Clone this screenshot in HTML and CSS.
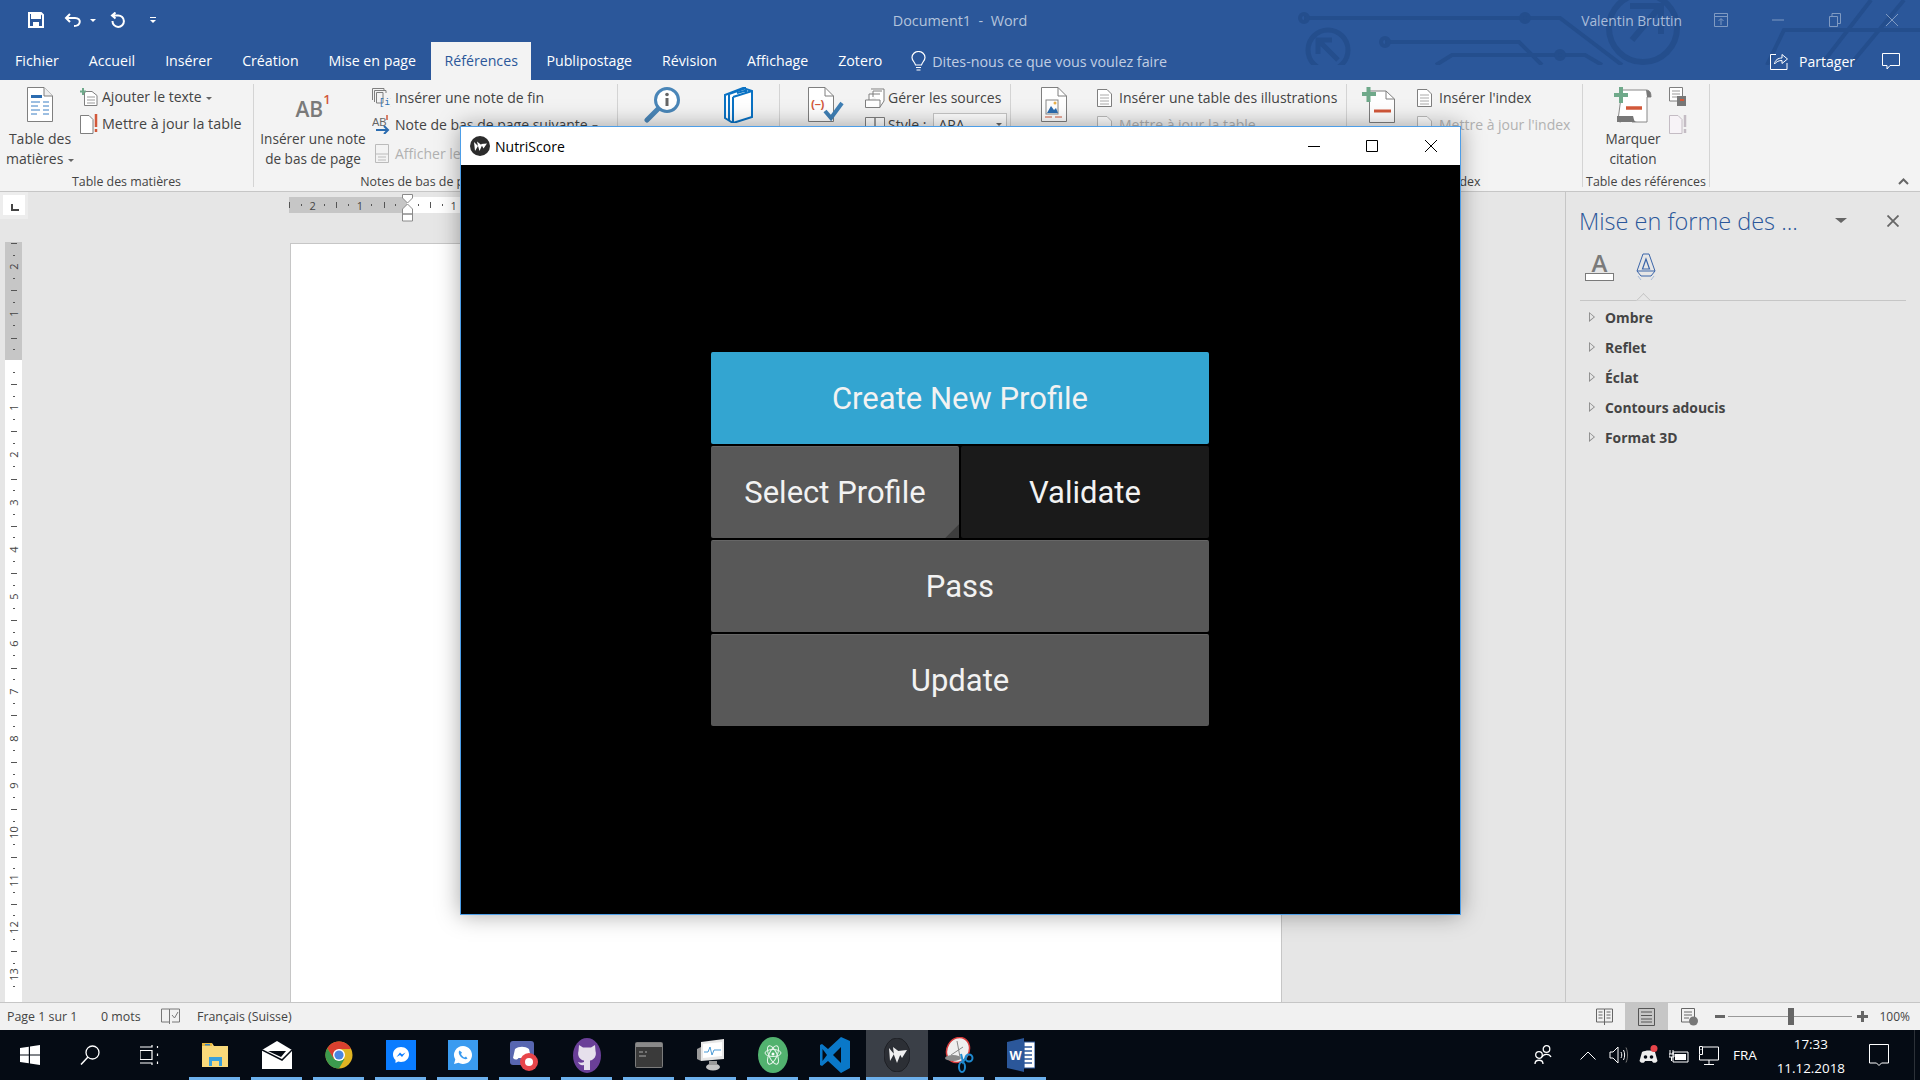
FILE: index.html
```html
<!DOCTYPE html>
<html lang="fr">
<head>
  <meta charset="UTF-8">
  <title>Document1 - Word</title>
  <link rel="stylesheet" href="styles.css">
</head>
<body>
  <div class="word">

    <div class="head">
      <svg class="circuit" viewBox="0 0 640 65" width="640" height="65">
        <g fill="none" stroke="#244e8d" stroke-width="4">
          <path d="M24 18H280L342 65M105 42H239L262 65M156 65L172 55H305L322 65M487 65L504 30H640M541 65L591 0M570 65L624 0"/>
          <circle cx="24" cy="18" r="4"/><circle cx="245" cy="18" r="4"/><circle cx="105" cy="42" r="4"/><circle cx="280" cy="55" r="4"/>
          <circle cx="48" cy="50" r="20" stroke-width="5"/>
          <path d="M38 40L58 60M38 54V40H52" stroke-width="5"/>
          <circle cx="363" cy="28" r="34" stroke-width="6"/>
          <path d="M350 6H381V34M352 40L378 9" stroke-width="6"/>
        </g>
      </svg>

      <!-- title bar -->
      <div class="titlebar">
        <div class="qat">
          <svg class="qat-save" width="16" height="16" viewBox="0 0 16 16"><path d="M1 1H13L15 3V15H1Z" fill="none" stroke="#fff" stroke-width="2"/><rect x="3" y="2" width="10" height="5" fill="#fff"/><rect x="5" y="10" width="6" height="5" fill="#fff"/></svg>
          <svg class="qat-undo" width="18" height="14" viewBox="0 0 18 14"><path d="M6 1L2 5L6 9M2 5H11C18 5 17 13 10 13" fill="none" stroke="#fff" stroke-width="2"/></svg>
          <span class="caret-white"></span>
          <svg class="qat-redo" width="17" height="16" viewBox="0 0 17 16"><path d="M6.500 .5L3 3.500L6.500 6.500M3 3.500H9A5.700 5.700 0 1 1 3.500 9" fill="none" stroke="#fff" stroke-width="2"/></svg>
          <span class="qat-more"></span>
        </div>
        <div class="doc-title">Document1&nbsp; -&nbsp; Word</div>
        <div class="title-right">
          <span class="user">Valentin Bruttin</span>
          <div class="win-btn"><svg width="14" height="14" viewBox="0 0 14 14"><path d="M.5.5H13.500V13.500H.5ZM.5 3.500H13.500M7 12V6M4.500 8L7 5.500L9.500 8" fill="none" stroke="#7f9ac2"/></svg></div>
          <div class="win-btn"><svg width="12" height="2" viewBox="0 0 12 2"><path d="M0 1H12" stroke="#7f9ac2"/></svg></div>
          <div class="win-btn"><svg width="12" height="14" viewBox="0 0 12 14"><path d="M.5 3.500H8.500V13.500H.5ZM3 3.500V.5H11.500V10.500H8.500" fill="none" stroke="#7f9ac2"/></svg></div>
          <div class="win-btn"><svg width="12" height="12" viewBox="0 0 12 12"><path d="M0 0L12 12M12 0L0 12" stroke="#7f9ac2"/></svg></div>
        </div>
      </div>

      <!-- tabs -->
      <div class="tabs">
        <span class="tab">Fichier</span>
        <span class="tab">Accueil</span>
        <span class="tab">Insérer</span>
        <span class="tab">Création</span>
        <span class="tab">Mise en page</span>
        <span class="tab active">Références</span>
        <span class="tab">Publipostage</span>
        <span class="tab">Révision</span>
        <span class="tab">Affichage</span>
        <span class="tab">Zotero</span>
        <div class="tell-me">
          <svg width="15" height="21" viewBox="0 0 15 21"><path d="M4.500 14C4 11 1 10 1 6.500A6.500 6 0 0 1 14 6.500C14 10 11 11 10.500 14ZM5 16.500H10M5.500 19H9.500" fill="none" stroke="#fff" stroke-width="1.200"/></svg>
          <span>Dites-nous ce que vous voulez faire</span>
        </div>
        <div class="share">
          <svg width="18" height="17" viewBox="0 0 18 17"><path d="M6 1.500H.5V16.500H17V10M4.500 11C5 7 8 5 12 5V1.500L17.500 6L12 10.500V7.500C9 7.500 6.500 8.500 4.500 11Z" fill="none" stroke="#fff"/></svg>
          <span>Partager</span>
        </div>
        <div class="comment"><svg width="18" height="17" viewBox="0 0 18 17"><path d="M.5.5H17.500V12.500H8L5 16V12.500H.5Z" fill="none" stroke="#fff"/></svg></div>
      </div>
    </div>

    <!-- ribbon -->
    <div class="ribbon">
      <section class="group g1">
        <div class="group-body">
          <div class="big-btn w80">
            <svg class="big-icon" width="26" height="35" viewBox="0 0 26 35"><path d="M.5.5H17L25.500 9V34.500H.5Z" fill="#fff" stroke="#7f7f7f"/><path d="M17 .5V9H25.500" fill="#eee" stroke="#7f7f7f"/><path d="M4 8H15V11H4Z" fill="#2b6cb0"/><path d="M4 15H13M16 15H22M4 19H11M16 19H22M4 23H13M16 23H22M4 27H10M16 27H22" stroke="#3b7fc4"/></svg>
            <span>Table des</span>
            <span>matières <i class="caret"></i></span>
          </div>
          <div class="small-col up">
            <div class="small-btn">
              <svg width="18" height="18" viewBox="0 0 18 18"><path d="M4.500 3.500H12L17 7.500V17.500H4.500Z" fill="#fff" stroke="#7f7f7f"/><path d="M7 9H15M7 12H15M7 15H15" stroke="#999"/><path d="M3 0V7M0 3.500H6" stroke="#6fa98a" stroke-width="2"/></svg>
              <span>Ajouter le texte <i class="caret"></i></span>
            </div>
            <div class="small-btn">
              <svg width="18" height="20" viewBox="0 0 18 20"><path d="M.5 1.500H9L13 5.500V19.500H.5Z" fill="#fff" stroke="#7f7f7f"/><path d="M16 0V13M16 15V18" stroke="#d2583a" stroke-width="2.500"/></svg>
              <span class="wide-text">Mettre à jour la table</span>
            </div>
          </div>
        </div>
        <div class="group-label">Table des matières</div>
      </section>

      <section class="group g2">
        <div class="group-body">
          <div class="big-btn w118">
            <div class="ab-icon"><span>AB</span><span class="ab-one">1</span></div>
            <span class="big-text">Insérer une note</span>
            <span class="big-text">de bas de page</span>
          </div>
          <div class="small-col">
            <div class="small-btn">
              <svg width="19" height="19" viewBox="0 0 19 19"><path d="M.5.5H12V3M2.500 2.500H14V5M4.500 4.500H11V15H4.500ZM.5.5V12M2.500 2.500V14" fill="none" stroke="#7f7f7f"/><text x="7" y="17" font-size="9" font-family="Liberation Mono" fill="#2b6cb0">[i]</text></svg>
              <span>Insérer une note de fin</span>
            </div>
            <div class="small-btn">
              <svg width="19" height="19" viewBox="0 0 19 19"><text x="0" y="11" font-size="11" font-family="Liberation Sans" fill="#666">AB</text><path d="M15 0V5" stroke="#d2583a" stroke-width="1.500"/><path d="M4 15H16M12 11L16 15L12 19" fill="none" stroke="#2b6cb0" stroke-width="2"/></svg>
              <span>Note de bas de page suivante <i class="caret"></i></span>
            </div>
            <div class="small-btn disabled low">
              <svg width="19" height="19" viewBox="0 0 19 19"><path d="M3.500.5H16.500V18.500H3.500ZM3.500 10H16.500M6 13H14M6 16H14" fill="none" stroke="#bbb"/></svg>
              <span>Afficher les notes</span>
            </div>
          </div>
        </div>
        <div class="group-label label-left">Notes de bas de page</div>
      </section>

      <section class="group g3">
        <div class="group-body">
          <div class="big-btn w82">
            <svg class="big-icon nudge" width="37" height="36" viewBox="0 0 37 36"><circle cx="23" cy="13" r="11.500" fill="#fff" stroke="#4a86b8" stroke-width="3"/><path d="M14 22L3 33" stroke="#4a86b8" stroke-width="5" stroke-linecap="round"/><path d="M23 11V19" stroke="#666" stroke-width="3"/><circle cx="23" cy="7.500" r="1.800" fill="#666"/></svg>
          </div>
          <div class="big-btn w76">
            <svg class="big-icon" width="29" height="36" viewBox="0 0 29 36"><path d="M1 8L19 1L28 4V30L9 36L1 31ZM5 6V33M9 10V36M9 10L28 4M5 7L22 1" fill="#fff" stroke="#0a72c4" stroke-width="2"/><path d="M13 6L22 3.500V6" fill="none" stroke="#0a72c4" stroke-width="2"/></svg>
          </div>
        </div>
      </section>

      <section class="group g4">
        <div class="group-body">
          <div class="big-btn w85">
            <svg class="big-icon nudge" width="36" height="36" viewBox="0 0 36 36"><path d="M.5.5H17L25.500 9V34.500H.5Z" fill="#fff" stroke="#7f7f7f"/><path d="M17 .5V9H25.500" fill="none" stroke="#7f7f7f"/><text x="3" y="21" font-size="11" font-family="Liberation Sans" font-weight="700" fill="#d2583a">(–)</text><path d="M17 24L23 31L34 16" fill="none" stroke="#3f7fb5" stroke-width="4"/></svg>
          </div>
          <div class="small-col">
            <div class="small-btn tight">
              <svg width="20" height="20" viewBox="0 0 20 20"><path d="M.5 12H15V19.500H.5ZM6 1H19V13L15 19M8 9V3H17M4 12V6H15" fill="#fff" stroke="#7f7f7f"/></svg>
              <span>Gérer les sources</span>
            </div>
            <div class="small-btn tight">
              <svg width="20" height="18" viewBox="0 0 20 18"><path d="M.5 1.500H10V17H.5ZM10 1.500H19.500V17H10Z" fill="#fff" stroke="#7f7f7f"/></svg>
              <span>Style :</span>
              <div class="style-select">APA<i class="caret"></i></div>
            </div>
          </div>
        </div>
      </section>

      <section class="group g5">
        <div class="group-body">
          <div class="big-btn w86">
            <svg class="big-icon" width="26" height="35" viewBox="0 0 26 35"><path d="M.5.5H17L25.500 9V34.500H.5Z" fill="#fff" stroke="#7f7f7f"/><path d="M17 .5V9H25.500" fill="none" stroke="#7f7f7f"/><rect x="5" y="13" width="12" height="14" fill="#fff" stroke="#888"/><path d="M6 26L10 19L13 23L15 21L17 26Z" fill="#2b6cb0"/><circle cx="14" cy="16" r="1.500" fill="#e9b04a"/><path d="M4 30H11M14 30H21" stroke="#d2583a"/></svg>
          </div>
          <div class="small-col">
            <div class="small-btn narrow">
              <svg width="15" height="18" viewBox="0 0 15 18"><path d="M.5.5H10L14.500 5V17.500H.5Z" fill="#fff" stroke="#7f7f7f"/><path d="M3 6H12M3 9H12M3 12H12M3 15H12" stroke="#aaa"/></svg>
              <span>Insérer une table des illustrations</span>
            </div>
            <div class="small-btn narrow disabled">
              <svg width="15" height="18" viewBox="0 0 15 18"><path d="M.5.5H10L14.500 5V17.500H.5Z" fill="#fff" stroke="#bbb"/></svg>
              <span>Mettre à jour la table</span>
            </div>
          </div>
        </div>
      </section>

      <section class="group g6">
        <div class="group-body">
          <div class="big-btn w70">
            <svg class="big-icon pull" width="33" height="36" viewBox="0 0 33 36"><path d="M7.500 4H24L32.500 12V35.500H7.500Z" fill="#fff" stroke="#7f7f7f"/><path d="M24 4V12H32.500" fill="none" stroke="#7f7f7f"/><path d="M12 24H29" stroke="#d2583a" stroke-width="3"/><path d="M6.500 0V15M0 7H14" stroke="#6fa98a" stroke-width="4"/></svg>
          </div>
          <div class="small-col">
            <div class="small-btn narrow">
              <svg width="15" height="18" viewBox="0 0 15 18"><path d="M.5.5H10L14.500 5V17.500H.5Z" fill="#fff" stroke="#7f7f7f"/><path d="M3 6H12M3 9H12M3 12H12M3 15H12" stroke="#aaa"/></svg>
              <span>Insérer l'index</span>
            </div>
            <div class="small-btn narrow disabled">
              <svg width="15" height="18" viewBox="0 0 15 18"><path d="M.5.5H10L14.500 5V17.500H.5Z" fill="#fff" stroke="#bbb"/></svg>
              <span>Mettre à jour l'index</span>
            </div>
          </div>
        </div>
        <div class="group-label">Index</div>
      </section>

      <section class="group g7">
        <div class="group-body">
          <div class="big-btn w100">
            <svg class="big-icon short" width="38" height="36" viewBox="0 0 38 36"><path d="M8 3H32C36 3 37 6 37 10H33V35H18C15 32 15 30 12 30H4V33C8 36 6 36 4 33Z" fill="#fff" stroke="#888"/><path d="M3 35V29H19C20 32 20 35 23 35Z" fill="#777"/><path d="M32 3C36 3 37 6 37 10H33Z" fill="#777"/><path d="M12 21H28" stroke="#d2583a" stroke-width="3.500"/><path d="M7 0V16M0 8H14" stroke="#6fa98a" stroke-width="4"/></svg>
            <span class="big-text">Marquer</span>
            <span class="big-text">citation</span>
          </div>
          <div class="tiny-col">
            <svg width="18" height="20" viewBox="0 0 18 20"><path d="M.5.5H13.500V14H.5Z" fill="#fff" stroke="#7f7f7f"/><path d="M3 4H11M3 7H11M3 10H8" stroke="#999"/><path d="M8 9H17V19H8Z" fill="#777"/><path d="M11 13H15" stroke="#d2583a" stroke-width="2"/></svg>
            <svg width="18" height="19" viewBox="0 0 18 19"><path d="M.5.5H9L13 4.500V18.500H.5Z" fill="#f7f3f7" stroke="#c4bcc4"/><path d="M16 0V12M16 14V18" stroke="#c4bcc4" stroke-width="2.500"/></svg>
          </div>
        </div>
        <div class="group-label">Table des références</div>
      </section>

      <div class="collapse">
        <svg width="11" height="7" viewBox="0 0 11 7"><path d="M1 6L5.500 1.500L10 6" fill="none" stroke="#666" stroke-width="2"/></svg>
      </div>
    </div>

    <!-- document area -->
    <div class="workspace">
      <div class="left-col">
        <div class="tab-stop"><span class="tab-stop-box"><i></i></span></div>
        <div class="v-ruler">
          <div class="v-gray">
            <div class="vcell"><b>2</b></div>
            <div class="vcell"><b>1</b></div>
            <div class="vhalf-end"></div>
          </div>
          <div class="v-white">
            <div class="vhalf-start"></div>
            <div class="vcell"><b>1</b></div>
            <div class="vcell"><b>2</b></div>
            <div class="vcell"><b>3</b></div>
            <div class="vcell"><b>4</b></div>
            <div class="vcell"><b>5</b></div>
            <div class="vcell"><b>6</b></div>
            <div class="vcell"><b>7</b></div>
            <div class="vcell"><b>8</b></div>
            <div class="vcell"><b>9</b></div>
            <div class="vcell"><b>10</b></div>
            <div class="vcell"><b>11</b></div>
            <div class="vcell"><b>12</b></div>
            <div class="vcell"><b>13</b></div>
          </div>
        </div>
      </div>

      <div class="doc-col">
        <div class="h-ruler">
          <div class="h-gray">
            <div class="hcell"><b>2</b></div>
            <div class="hcell"><b>1</b></div>
            <div class="hhalf-end"></div>
          </div>
          <div class="h-white">
            <div class="hhalf-start"></div>
            <div class="hcell"><b>1</b></div>
            <div class="hcell"><b>2</b></div>
          </div>
          <svg class="indent-marker" width="11" height="28" viewBox="0 0 11 28"><path d="M.5.5H10.500V4L5.500 9L.5 4ZM5.500 10L10.500 15V20H.5V15ZM.5 20H10.500V27H.5Z" fill="#fff" stroke="#8a8a8a"/></svg>
        </div>
        <div class="page"></div>
      </div>

      <aside class="pane">
        <div class="pane-head">
          <span class="pane-title">Mise en forme des ...</span>
          <span class="pane-caret"></span>
          <svg class="pane-close" width="12" height="12" viewBox="0 0 12 12"><path d="M.5.5L11.500 11.500M11.500.5L.5 11.500" stroke="#666" stroke-width="1.800"/></svg>
        </div>
        <div class="pane-icons">
          <div class="fill-icon"><span>A</span><i></i></div>
          <svg class="effect-icon" width="20" height="28" viewBox="0 0 20 28"><path d="M7 1H13L19 18L15 23H5L1 18Z" fill="none" stroke="#3a64a8"/><path d="M10 6L6.500 16H13.500ZM1 18H19" fill="none" stroke="#3a64a8" stroke-width="1.200"/><path d="M2 23L5 27M18 23L15 27" stroke="#a9bcd9"/></svg>
        </div>
        <div class="pane-rule"><span class="pane-notch"></span></div>
        <ul class="pane-list">
          <li>Ombre</li>
          <li>Reflet</li>
          <li>Éclat</li>
          <li>Contours adoucis</li>
          <li>Format 3D</li>
        </ul>
      </aside>
    </div>

    <!-- status bar -->
    <div class="statusbar">
      <span class="st-page">Page 1 sur 1</span>
      <span class="st-words">0 mots</span>
      <svg class="st-proof" width="19" height="17" viewBox="0 0 19 17"><path d="M.5 1H8.500V14H.5ZM8.500 1V16M8.500 1H18.500V14H11M11 7L13.500 10L17 4" fill="none" stroke="#777"/></svg>
      <span class="st-lang">Français (Suisse)</span>
      <div class="st-right">
        <div class="view"><svg width="17" height="17" viewBox="0 0 17 17"><path d="M.5 1H8.500V14H.5ZM8.500 1H16.500V14H8.500ZM8.500 14V17M2.500 4H6.500M2.500 7H6.500M2.500 10H6.500M10.500 4H14.500M10.500 7H14.500M10.500 10H14.500" fill="none" stroke="#666"/></svg></div>
        <div class="view active"><svg width="17" height="18" viewBox="0 0 17 18"><path d="M.5.5H16.500V17.500H.5ZM3 4H14M3 7.500H14M3 11H14M3 14H14" fill="none" stroke="#555"/></svg></div>
        <div class="view"><svg width="17" height="18" viewBox="0 0 17 18"><path d="M.5.5H13.500V14H.5ZM3 4H11M3 7H11M3 10H8" fill="#f1f1f1" stroke="#666"/><circle cx="12.500" cy="13" r="4.500" fill="#777"/></svg></div>
        <span class="zoom-minus"></span>
        <div class="zoom-track"><span class="zoom-thumb"></span></div>
        <span class="zoom-plus"></span>
        <span class="zoom-value">100%</span>
      </div>
    </div>

    <!-- taskbar -->
    <div class="taskbar">
      <div class="start">
        <svg width="20" height="20" viewBox="0 0 20 20"><path d="M0 3L8.800 1.700V9.500H0ZM10 1.500L20 0V9.500H10ZM0 10.500H8.800V18.300L0 17ZM10 10.500H20V20L10 18.500Z" fill="#fff"/></svg>
      </div>
      <div class="start">
        <svg width="20" height="20" viewBox="0 0 20 20"><circle cx="12.500" cy="7.500" r="6.500" fill="none" stroke="#fff" stroke-width="1.300"/><path d="M8 12L1 19.500" stroke="#fff" stroke-width="1.500"/></svg>
      </div>
      <div class="start">
        <svg width="20" height="20" viewBox="0 0 20 20"><path d="M0 2H12V0M0 18H12V20M0 5.500H12V14.500H0ZM17.500 1V3M17.500 8.500V11M17.500 16.500V19" fill="none" stroke="#fff" stroke-width="1.200"/></svg>
      </div>

      <div class="task-apps">
        <div class="app open"><svg width="28" height="28" viewBox="0 0 28 28"><path d="M1 2H11L13 5H27V26H1Z" fill="#f9d97a"/><path d="M1 2H11V5H1Z" fill="#e8b83e"/><rect x="4" y="3" width="5" height="1.500" fill="#3a87c8"/><path d="M8 16H21V25H8Z" fill="#3aa0dc"/><rect x="11" y="20" width="7" height="6" fill="#f9d97a"/></svg></div>
        <div class="app open"><svg width="30" height="28" viewBox="0 0 30 28"><path d="M0 9L15 0L30 9V28H0Z" fill="#fff"/><path d="M0 9L20 19L30 9" fill="none" stroke="#050b14" stroke-width="1.500"/><path d="M6 10H24L19 16Z" fill="#050b14"/></svg></div>
        <div class="app open"><svg width="28" height="34" viewBox="0 0 28 28"><circle cx="14" cy="14" r="13.500" fill="#e0b422"/><path d="M14 .5A13.500 13.500 0 0 0 2.300 7.200L8 17H14V8H26A13.500 13.500 0 0 0 14 .5Z" fill="#d8402f"/><path d="M2.300 7.200A13.500 13.500 0 0 0 14 27.500L19.500 18H9Z" fill="#3c9a4e"/><circle cx="14" cy="14" r="6" fill="#fff"/><circle cx="14" cy="14" r="4.600" fill="#4a86e0"/></svg></div>
        <div class="app open"><div class="square blue1"><svg width="18" height="18" viewBox="0 0 18 18"><path d="M9 1C4.300 1 1 4.200 1 8.500C1 10.800 2 12.700 3.500 14V17L6.200 15.500C7.100 15.800 8 16 9 16C13.700 16 17 12.800 17 8.500S13.700 1 9 1Z" fill="#fff"/><path d="M4.500 11L8 6.500L10 8.500L13.500 6.500L10 11L8 9Z" fill="#0a7cff"/></svg></div></div>
        <div class="app open"><div class="square blue2"><svg width="20" height="20" viewBox="0 0 20 20"><path d="M10 1A9 9 0 0 0 2.300 14.600L1 19L5.500 17.800A9 9 0 1 0 10 1Z" fill="#fff"/><path d="M6.500 5.500C5 7 6 10 8 12S13 15 14.500 13.500L13 11.500L11.500 12.500C10 12 8.500 10 8 9L9 7.500Z" fill="#3a9bf0"/></svg></div></div>
        <div class="app open"><svg width="30" height="34" viewBox="0 0 30 34"><rect y="3" width="24" height="24" rx="3" fill="#5866b0"/><path d="M5 11C9 8 15 8 19 11L21 20C19 22 17 22 15.500 20H8.500C7 22 5 22 3 20Z" fill="#fff"/><circle cx="19" cy="24" r="9" fill="#e8454a"/><circle cx="19" cy="24" r="4" fill="#fff"/></svg></div>
        <div class="app open"><svg width="28" height="35" viewBox="0 0 28 35"><ellipse cx="14" cy="17.500" rx="14" ry="17.500" fill="#6a3f98"/><path d="M6 7L10 9.500H18L22 7L22.500 13C24 18 21 22 17 22.500V32H11V27C8 28 6 26 5 24C7 25 9 25 11 24V22.500C7 22 4 18 5.500 13Z" fill="#e6e0ec"/></svg></div>
        <div class="app open"><svg width="28" height="26" viewBox="0 0 28 26"><rect x=".5" y=".5" width="27" height="25" rx="1" fill="#3a3a3a" stroke="#7c7c7c"/><rect x="1" y="1" width="26" height="4" fill="#8a8a8a"/><path d="M4 10H8M10 10H12M4 14H11" stroke="#aaa"/></svg></div>
        <div class="app open"><svg width="28" height="32" viewBox="0 0 28 32"><path d="M4 3L27 0V20L4 22Z" fill="#e7e7e7"/><path d="M6 5L25 3V17L6 19Z" fill="#fff"/><path d="M7 13H11L13 8L15 16L17 11H24" fill="none" stroke="#4a9ad6"/><ellipse cx="16" cy="28" rx="7" ry="3.500" fill="#c4c4c4"/><path d="M12 22H20V26H12Z" fill="#9a9a9a"/><path d="M0 10L4 8V22L0 20Z" fill="#9a9a9a"/></svg></div>
        <div class="app open"><svg width="30" height="36" viewBox="0 0 30 36"><ellipse cx="15" cy="18" rx="15" ry="18" fill="#52b26f"/><ellipse cx="15" cy="16" rx="8" ry="3.500" fill="none" stroke="#e8f5ec"/><ellipse cx="15" cy="18" rx="4" ry="10" fill="none" stroke="#e8f5ec" transform="rotate(25 15 18)"/><ellipse cx="15" cy="18" rx="4" ry="10" fill="none" stroke="#e8f5ec" transform="rotate(-25 15 18)"/><circle cx="15" cy="17" r="1.500" fill="#fff"/></svg></div>
        <div class="app open"><svg width="30" height="36" viewBox="0 0 30 36"><path d="M21 0L30 4V31L21 36L8 24L2 29L0 28V8L2 7L8 12ZM21 10L13 18L21 26Z" fill="#0a78c8"/><path d="M2.500 12V24L7 18Z" fill="#050b14"/></svg></div>
        <div class="app open current"><svg width="26" height="34" viewBox="0 0 26 34"><ellipse cx="13" cy="17" rx="13" ry="17" fill="#2c2f35" stroke="#1f2126"/><path d="M5 10L10 16L6 23ZM9 9L17 15L13 25L10 17ZM14 13L23 12L18 20Z" fill="#f0f0f0"/></svg></div>
        <div class="app open"><svg width="30" height="36" viewBox="0 0 30 36"><ellipse cx="14" cy="13" rx="11" ry="13" fill="#efefef" stroke="#d83c3c" stroke-width="1.500" transform="rotate(30 14 13)"/><path d="M13 4L16 20M7 18L19 10" stroke="#888"/><ellipse cx="9" cy="21" rx="8" ry="3" fill="#8a8a8a"/><circle cx="25" cy="21" r="3.500" fill="none" stroke="#1f8ad0" stroke-width="2"/><ellipse cx="18" cy="30" rx="3" ry="5" fill="none" stroke="#1f8ad0" stroke-width="2"/><path d="M17 17L19 25L23 19" fill="none" stroke="#1f8ad0" stroke-width="2"/></svg></div>
        <div class="app open"><svg width="28" height="34" viewBox="0 0 28 34"><path d="M0 4L17 0V34L0 30Z" fill="#2b579a"/><path d="M17 4H28V30H17Z" fill="#fff" stroke="#2b579a" stroke-width="1.200"/><path d="M17 9H25M17 13H25M17 17H25M17 21H25M17 25H25" stroke="#2b579a" stroke-width="1.500"/><text x="2.500" y="22" font-size="13" font-weight="700" font-family="Liberation Sans" fill="#fff">W</text></svg></div>
      </div>

      <div class="tray">
        <svg class="tray-people" width="18" height="20" viewBox="0 0 18 20"><circle cx="12.500" cy="4" r="3.300" fill="none" stroke="#fff" stroke-width="1.300"/><path d="M8 12C9 9 15 8 17 12" fill="none" stroke="#fff" stroke-width="1.300"/><circle cx="5" cy="10" r="3.300" fill="none" stroke="#fff" stroke-width="1.300"/><path d="M1 19C1 14 9 14 9 19" fill="none" stroke="#fff" stroke-width="1.300"/></svg>
        <svg class="tray-chevron" width="16" height="9" viewBox="0 0 16 9"><path d="M.5 8.500L8 1L15.500 8.500" fill="none" stroke="#fff"/></svg>
        <svg class="tray-volume" width="19" height="18" viewBox="0 0 19 18"><path d="M1 6H4L9 1V17L4 12H1ZM12 6C13 8 13 10 12 12M14.500 4C16 7 16 11 14.500 14" fill="none" stroke="#fff"/><path d="M17 1.500C19 6 19 12 17 16.500" fill="none" stroke="#777"/></svg>
        <svg class="tray-discord" width="19" height="20" viewBox="0 0 19 20"><path d="M3 7C7 5 12 5 16 7L18.500 16C17 18 15 18.500 13.500 17L13 16H6L5.500 17C4 18.500 2 18 .5 16Z" fill="#eee"/><circle cx="6.500" cy="12" r="1.800" fill="#050b14"/><circle cx="12.500" cy="12" r="1.800" fill="#050b14"/><circle cx="15" cy="3.500" r="3.500" fill="#e8454a"/></svg>
        <svg class="tray-battery" width="20" height="16" viewBox="0 0 20 16"><path d="M4 5H19V15H4Z" fill="none" stroke="#fff"/><rect x="6" y="7" width="11" height="6" fill="#fff"/><path d="M1 3V7M4 3V7M0 7H5V10H0ZM2.500 10V14" fill="none" stroke="#fff"/></svg>
        <svg class="tray-network" width="20" height="20" viewBox="0 0 20 20"><path d="M4 2H19.500V15H.5V10M10 15V19M5 19.500H15M.5 1.500H3.500V9.500H.5ZM2 4V5" fill="none" stroke="#fff"/></svg>
        <span class="tray-lang">FRA</span>
        <div class="clock"><span>17:33</span><span>11.12.2018</span></div>
        <svg class="tray-notif" width="20" height="23" viewBox="0 0 20 23"><path d="M.5.5H19.500V19H12.500L10 21.500L7.500 19H.5Z" fill="none" stroke="#fff"/></svg>
        <span class="show-desktop"></span>
      </div>
    </div>

    <!-- kivy window on top of word -->
    <div class="app-window">
      <div class="app-title">
        <svg width="20" height="20" viewBox="0 0 20 20"><circle cx="10" cy="10" r="10" fill="#2c2c2c"/><path d="M4 6L8 10L5 15ZM7 5.500L12 9.500L9.500 15L8 10ZM11 8L17 7.500L13.500 12.500Z" fill="#fff"/></svg>
        <span class="app-name">NutriScore</span>
        <div class="app-controls">
          <div class="app-ctl"><svg width="12" height="1" viewBox="0 0 12 1"><path d="M0 .5H12" stroke="#000"/></svg></div>
          <div class="app-ctl"><svg width="12" height="12" viewBox="0 0 12 12"><path d="M.5.5H11.500V11.500H.5Z" fill="none" stroke="#000"/></svg></div>
          <div class="app-ctl"><svg width="12" height="12" viewBox="0 0 12 12"><path d="M0 0L12 12M12 0L0 12" stroke="#000"/></svg></div>
        </div>
      </div>
      <div class="app-body">
        <div class="menu">
          <button class="kv-btn primary">Create New Profile</button>
          <div class="kv-row">
            <button class="kv-btn spinner">Select Profile</button>
            <button class="kv-btn off">Validate</button>
          </div>
          <button class="kv-btn">Pass</button>
          <button class="kv-btn">Update</button>
        </div>
      </div>
    </div>
  </div>
</body>
</html>
```

FILE: styles.css
```css
* {
  box-sizing: border-box;
}

html, body {
  margin: 0;
  height: 100%;
  overflow: hidden;
}

body {
  font-family: "Open Sans", "Noto Sans", sans-serif;
  font-size: 14px;
  color: #444;
}

svg {
  display: block;
  flex: none;
}

.word {
  position: relative;
  display: flex;
  flex-direction: column;
  width: 1920px;
  height: 1080px;
  background: #e6e6e6;
}

.head {
  position: relative;
  background: #2b579a;
}

.circuit {
  position: absolute;
  left: 1280px;
  top: 0;
}

/* title bar */
.titlebar {
  position: relative;
  display: flex;
  align-items: center;
  height: 40px;
}

.qat {
  flex: 1;
  display: flex;
  align-items: center;
  padding-left: 28px;
}

.qat-undo {
  margin-left: 20px;
}

.caret-white {
  margin-left: 8px;
  border: 3px solid transparent;
  border-top-color: #fff;
  border-bottom: 0;
}

.qat-redo {
  margin-left: 13px;
}

.qat-more {
  position: relative;
  width: 6px;
  height: 6px;
  margin-left: 24px;
  border-top: 1px solid #fff;
}

.qat-more::after {
  content: "";
  position: absolute;
  left: 0;
  top: 2px;
  border: 3px solid transparent;
  border-top-color: #fff;
  border-bottom: 0;
}

.doc-title {
  color: #b4c4dc;
  font-size: 14.4px;
}

.title-right {
  flex: 1;
  display: flex;
  align-items: center;
  justify-content: flex-end;
  padding-left: 28px;
}

.user {
  margin-right: 10px;
  color: #a9bcd9;
  font-size: 13.8px;
}

.win-btn {
  display: flex;
  align-items: center;
  justify-content: center;
  width: 57px;
  height: 40px;
}

/* tabs */
.tabs {
  position: relative;
  display: flex;
  align-items: flex-end;
  height: 40px;
  color: #fff;
  font-size: 14.2px;
}

.tab {
  height: 38px;
  padding: 0 15px;
  line-height: 38px;
}

.tab.active {
  padding: 0 13.500px;
  background: #f3f3f3;
  color: #2b579a;
}

.tell-me {
  display: flex;
  align-items: center;
  gap: 6px;
  height: 38px;
  margin-left: 14px;
  color: #c1cee3;
  font-size: 14.3px;
}

.share {
  display: flex;
  align-items: center;
  gap: 11px;
  height: 38px;
  margin-left: auto;
  font-size: 14px;
}

.comment {
  display: flex;
  align-items: center;
  height: 38px;
  margin-left: 27px;
  margin-right: 20px;
}

/* ribbon */
.ribbon {
  display: flex;
  height: 112px;
  padding-top: 4px;
  background: #f3f3f3;
  border-bottom: 1px solid #c6c6c6;
}

.group {
  display: flex;
  flex-direction: column;
  height: 103px;
  border-right: 1px solid #d4d4d4;
}

.g1 { width: 254px; }
.g2 { width: 364px; }
.g3 { width: 162px; }
.g4 { width: 231px; }
.g5 { width: 336px; }
.g6 { width: 236px; }
.g7 { width: 127px; }

.group-body {
  display: flex;
  flex: none;
  height: 87px;
}

.group-label {
  height: 16px;
  line-height: 22px;
  text-align: center;
  font-size: 12.4px;
  white-space: nowrap;
}

.group-label.label-left {
  padding-right: 26px;
}

.big-btn {
  display: flex;
  flex-direction: column;
  align-items: center;
  flex: none;
  line-height: 20px;
  white-space: nowrap;
}

.big-text {
  font-size: 13.6px;
}

.big-icon {
  margin-top: 3px;
  margin-bottom: 7px;
}

.big-icon.nudge {
  margin-left: 6px;
}

.big-icon.pull {
  margin-left: -8px;
}

.big-icon.short {
  margin-bottom: 6px;
}

.w70 { width: 70px; }
.w76 { width: 76px; }
.w80 { width: 80px; }
.w82 { width: 82px; }
.w85 { width: 85px; }
.w86 { width: 86px; }
.w100 { width: 100px; }
.w118 { width: 118px; }

.ab-icon {
  display: flex;
  align-items: flex-start;
  height: 42px;
  margin-top: 3px;
  padding-top: 9px;
  font-size: 21px;
  line-height: 26px;
  font-weight: 600;
  color: #7a7a7a;
}

.ab-one {
  margin-top: -3px;
  font-size: 13px;
  line-height: 13px;
  color: #d2583a;
}

.small-col {
  display: flex;
  flex-direction: column;
}

.small-col.up {
  margin-top: -1px;
}

.small-btn {
  display: flex;
  align-items: center;
  gap: 4px;
  height: 27px;
  white-space: nowrap;
}

.small-btn.narrow {
  gap: 7px;
}

.small-btn.tight {
  gap: 3px;
}

.small-btn.low {
  margin-top: 2px;
}

.small-btn.disabled {
  color: #b1b1b1;
}

.wide-text {
  font-size: 14.300px;
}

.caret {
  display: inline-block;
  vertical-align: middle;
  margin-left: 1px;
  border: 3px solid transparent;
  border-top-color: #666;
  border-bottom: 0;
}

.style-select {
  display: flex;
  align-items: center;
  justify-content: space-between;
  width: 74px;
  height: 24px;
  margin-left: 4px;
  padding: 0 4px;
  background: #fff;
  border: 1px solid #c6c6c6;
}

.tiny-col {
  display: flex;
  flex-direction: column;
  gap: 8px;
  margin: 3px 0 0 -14px;
}

.collapse {
  flex: 1;
  display: flex;
  justify-content: flex-end;
  align-items: flex-end;
  padding: 0 11px 6px 0;
}

/* document area */
.workspace {
  flex: 1;
  display: flex;
  min-height: 0;
}

.left-col {
  flex: none;
  width: 28px;
}

.tab-stop {
  width: 28px;
  height: 27px;
  padding: 3px;
  background: #ededed;
}

.tab-stop-box {
  display: block;
  position: relative;
  width: 22px;
  height: 20px;
  background: #fff;
}

.tab-stop-box i {
  position: absolute;
  left: 8px;
  top: 9px;
  width: 8px;
  height: 7px;
  border-left: 2px solid #444;
  border-bottom: 2px solid #444;
}

.v-ruler {
  width: 17px;
  height: 760px;
  margin: 23px 0 0 5px;
  overflow: hidden;
}

.v-gray {
  height: 118px;
  padding-top: 1px;
  background: #c6c6c6;
}

.v-white {
  height: 642px;
  background: #fff;
}

.vcell {
  display: flex;
  align-items: center;
  justify-content: center;
  height: 47.25px;
  background:
    linear-gradient(#555, #555) center 0 / 6px 1px no-repeat,
    linear-gradient(#555, #555) center 11.500px / 2px 1px no-repeat,
    linear-gradient(#555, #555) center 35px / 2px 1px no-repeat;
}

.vcell b {
  font-weight: 400;
  font-size: 11px;
  line-height: 11px;
  white-space: nowrap;
  transform: rotate(-90deg);
}

.vhalf-end {
  height: 24px;
  background:
    linear-gradient(#555, #555) center 0 / 6px 1px no-repeat,
    linear-gradient(#555, #555) center 11.500px / 2px 1px no-repeat;
}

.vhalf-start {
  height: 24px;
  background: linear-gradient(#555, #555) center 12px / 2px 1px no-repeat;
}

.doc-col {
  flex: none;
  width: 1537px;
  padding-left: 261px;
}

.h-ruler {
  position: relative;
  display: flex;
  align-items: flex-start;
  height: 51px;
  padding-top: 5px;
}

.h-gray,
.h-white {
  display: flex;
  height: 16px;
}

.h-gray {
  width: 118px;
  background: #c6c6c6;
}

.h-white {
  width: 120px;
  background: #fff;
}

.hcell {
  flex: none;
  display: flex;
  align-items: center;
  justify-content: center;
  width: 47.25px;
  font-size: 11px;
  background:
    linear-gradient(#555, #555) 0 center / 1px 6px no-repeat,
    linear-gradient(#555, #555) 11.500px center / 1px 2px no-repeat,
    linear-gradient(#555, #555) 35px center / 1px 2px no-repeat;
}

.hcell b {
  font-weight: 400;
}

.hhalf-end {
  flex: none;
  width: 24px;
  background:
    linear-gradient(#555, #555) 0 center / 1px 6px no-repeat,
    linear-gradient(#555, #555) 11.500px center / 1px 2px no-repeat;
}

.hhalf-start {
  flex: none;
  width: 23px;
  background: linear-gradient(#555, #555) 11px center / 1px 2px no-repeat;
}

.indent-marker {
  position: absolute;
  left: 113px;
  top: 2px;
}

.page {
  width: 992px;
  height: 760px;
  margin-left: 1px;
  background: #fff;
  border: 1px solid #c6c6c6;
  border-bottom: 0;
}

.pane {
  flex: 1;
  padding-left: 13px;
  border-left: 1px solid #c6c6c6;
}

.pane-head {
  display: flex;
  align-items: center;
  height: 57px;
  margin-bottom: 3px;
}

.pane-title {
  width: 256px;
  font-size: 23.500px;
  font-weight: 300;
  color: #2b579a;
  white-space: nowrap;
}

.pane-caret {
  border: 6px solid transparent;
  border-top: 5px solid #666;
  border-bottom: 0;
}

.pane-close {
  margin-left: 40px;
}

.pane-icons {
  display: flex;
  align-items: flex-start;
  gap: 22px;
  height: 48px;
  padding: 1px 0 0 6px;
}

.fill-icon {
  width: 29px;
  text-align: center;
}

.fill-icon span {
  display: block;
  height: 20px;
  font-size: 24px;
  line-height: 20px;
  font-weight: 600;
  color: #7a7a7a;
}

.fill-icon i {
  display: block;
  height: 8px;
  background: #fff;
  border: 1px solid #7a7a7a;
}

.pane-rule {
  position: relative;
  width: 326px;
  height: 1px;
  margin-left: 1px;
  background: #c6c6c6;
}

.pane-notch {
  position: absolute;
  left: 58px;
  top: -5px;
  width: 11px;
  height: 11px;
  background: #e6e6e6;
  border-left: 1px solid #c6c6c6;
  border-top: 1px solid #c6c6c6;
  transform: rotate(45deg);
  clip-path: polygon(0 0, 100% 0, 0 100%);
}

.pane-list {
  list-style: none;
  margin: 2px 0 0;
  padding: 0;
}

.pane-list li {
  position: relative;
  height: 30px;
  padding-left: 26px;
  line-height: 30px;
  font-size: 13.900px;
  font-weight: 700;
  color: #444;
}

.pane-list li::before {
  content: "";
  position: absolute;
  left: 10px;
  top: 9px;
  width: 6px;
  height: 10px;
  background: #8a8a8a;
  clip-path: polygon(0 0, 100% 50%, 0 100%, 0 88%, 80% 50%, 15% 14%, 15% 86%, 0 88%);
}

/* status bar */
.statusbar {
  display: flex;
  align-items: center;
  height: 28px;
  padding-left: 7px;
  background: #f1f1f1;
  border-top: 1px solid #c6c6c6;
  font-size: 12.400px;
}

.st-page {
  width: 94px;
}

.st-words {
  width: 60px;
}

.st-proof {
  margin-right: 17px;
}

.st-right {
  display: flex;
  align-items: center;
  height: 100%;
  margin-left: auto;
  padding-right: 10px;
}

.view {
  display: flex;
  align-items: center;
  justify-content: center;
  width: 42.500px;
  height: 100%;
}

.view.active {
  background: #c6c6c6;
}

.zoom-minus {
  width: 10px;
  height: 3px;
  margin-left: 5px;
  background: #666;
}

.zoom-track {
  position: relative;
  width: 124px;
  height: 1px;
  margin-left: 3px;
  background: #999;
}

.zoom-thumb {
  position: absolute;
  left: 60px;
  top: -8px;
  width: 6px;
  height: 17px;
  background: #666;
}

.zoom-plus {
  position: relative;
  width: 11px;
  height: 3px;
  margin-left: 5px;
  background: #666;
}

.zoom-plus::after {
  content: "";
  position: absolute;
  left: 4px;
  top: -4px;
  width: 3px;
  height: 11px;
  background: #666;
}

.zoom-value {
  margin-left: 11px;
  font-size: 12px;
}

/* taskbar */
.taskbar {
  display: flex;
  align-items: center;
  height: 50px;
  background: #050b14;
  color: #fff;
}

.start {
  display: flex;
  flex: none;
  justify-content: center;
  width: 60px;
}

.task-apps {
  display: flex;
  height: 100%;
  margin-left: 4px;
}

.app {
  position: relative;
  display: flex;
  align-items: center;
  justify-content: center;
  width: 62px;
  height: 100%;
}

.app.open::after {
  content: "";
  position: absolute;
  left: 5px;
  right: 6px;
  bottom: 0;
  height: 3px;
  background: #6cb0ec;
}

.app.current {
  background: #3a3f47;
}

.app.current::after {
  left: 0;
  right: 0;
}

.square {
  display: flex;
  align-items: center;
  justify-content: center;
  width: 30px;
  height: 30px;
}

.blue1 { background: #0a7cff; }
.blue2 { background: #3a9bf0; }

.tray {
  position: relative;
  flex: 1;
  display: flex;
  align-items: center;
  height: 100%;
}

.tray-people { margin-left: 482px; }
.tray-chevron { margin-left: 28px; }
.tray-volume { margin-left: 13px; }
.tray-discord { margin-left: 11px; }
.tray-battery { margin-left: 11px; }
.tray-network { margin-left: 10px; }

.tray-lang {
  margin-left: 14px;
  font-size: 13.500px;
}

.clock {
  display: flex;
  flex-direction: column;
  align-items: center;
  width: 72px;
  margin-left: 18px;
  padding-top: 1px;
  font-size: 13.400px;
  line-height: 24px;
}

.tray-notif {
  margin-left: 22px;
}

.show-desktop {
  position: absolute;
  right: 5px;
  top: 0;
  width: 1px;
  height: 50px;
  background: #2c3138;
}

/* kivy window */
.app-window {
  position: absolute;
  left: 460px;
  top: 126px;
  display: flex;
  flex-direction: column;
  width: 1001px;
  height: 789px;
  border: 1px solid #4d9ee8;
  box-shadow: 0 0 22px rgba(0, 0, 0, 0.35);
}

.app-title {
  display: flex;
  align-items: center;
  gap: 5px;
  height: 38px;
  padding-left: 9px;
  background: #fff;
  color: #000;
}

.app-name {
  font-size: 14px;
}

.app-controls {
  display: flex;
  margin-left: auto;
}

.app-ctl {
  display: flex;
  align-items: center;
  justify-content: center;
  width: 58.500px;
  height: 38px;
}

.app-body {
  flex: 1;
  display: flex;
  align-items: center;
  justify-content: center;
  padding: 0 1px 1px 0;
  background: #000;
}

.menu {
  display: flex;
  flex-direction: column;
  gap: 1.700px;
  width: 498px;
}

.kv-row {
  display: flex;
  gap: 2px;
}

.kv-btn {
  position: relative;
  flex: 1;
  display: block;
  width: 100%;
  min-height: 92px;
  padding: 0;
  border: 0;
  border-top: 1px solid #666;
  border-radius: 2px;
  background: #585858;
  color: #f2f2f2;
  font-family: Roboto, sans-serif;
  font-size: 31px;
}

.kv-btn.primary {
  background: #33a5d1;
  border-top-color: #33a5d1;
}

.kv-btn.off {
  background: #1a1a1a;
  border-top-color: #1a1a1a;
}

.kv-btn.spinner::after {
  content: "";
  position: absolute;
  right: 0;
  bottom: 0;
  width: 14px;
  height: 14px;
  background: #3e3e3e;
  clip-path: polygon(100% 0, 100% 100%, 0 100%);
}
```
